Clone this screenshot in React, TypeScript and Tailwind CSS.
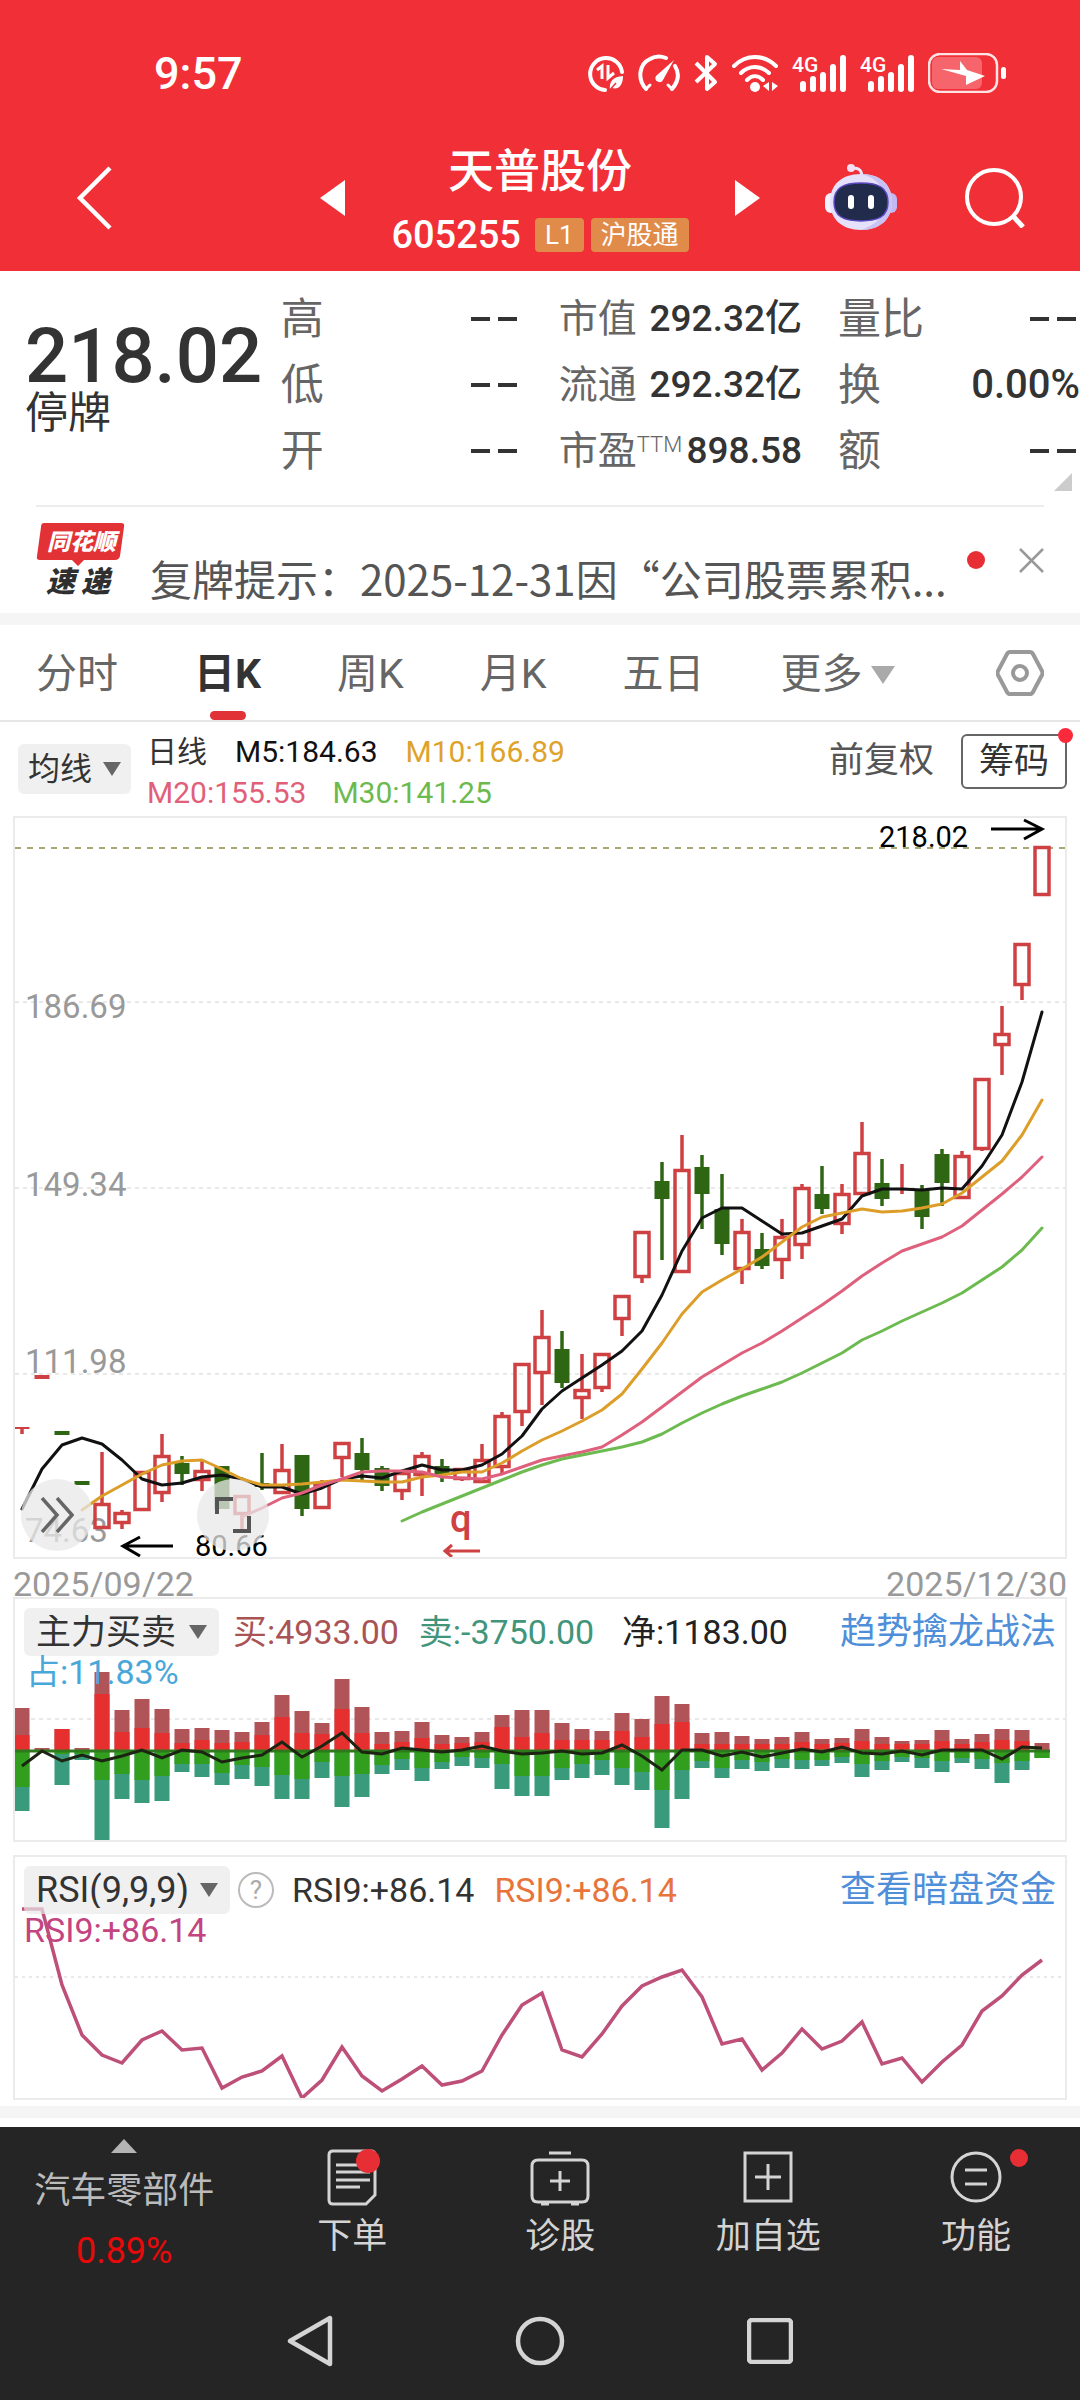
import React from 'react';
import clsx from 'clsx';

type Candle = [dir: 'up' | 'down', high: number, top: number, bottom: number, low: number];
type Flow = [buy: number, mainBuy: number, mainSell: number, sell: number];

const FIRST_X = 22;
const STEP = 20;
const AXIS_Y = 1751;

const CANDLES: Candle[] = [
  ['up', 1428, 1427, 1429, 1434],
  ['up', 1375, 1375, 1379, 1379],
  ['down', 1431, 1431, 1435, 1435],
  ['down', 1481, 1481, 1485, 1485],
  ['up', 1452, 1503, 1529, 1529],
  ['up', 1510, 1512, 1524, 1529],
  ['up', 1471, 1471, 1511, 1511],
  ['up', 1434, 1455, 1494, 1502],
  ['down', 1456, 1463, 1474, 1485],
  ['up', 1460, 1470, 1481, 1491],
  ['down', 1466, 1466, 1509, 1509],
  ['up', 1495, 1495, 1515, 1530],
  ['down', 1453, 1483, 1487, 1490],
  ['up', 1444, 1469, 1494, 1494],
  ['down', 1455, 1455, 1509, 1516],
  ['up', 1480, 1483, 1509, 1509],
  ['up', 1442, 1442, 1459, 1477],
  ['down', 1438, 1453, 1470, 1480],
  ['down', 1466, 1468, 1486, 1491],
  ['up', 1472, 1472, 1492, 1500],
  ['up', 1452, 1455, 1476, 1496],
  ['down', 1459, 1466, 1474, 1482],
  ['up', 1468, 1468, 1480, 1481],
  ['up', 1444, 1459, 1483, 1483],
  ['up', 1412, 1415, 1468, 1474],
  ['up', 1363, 1363, 1413, 1426],
  ['up', 1310, 1336, 1374, 1405],
  ['down', 1331, 1349, 1383, 1388],
  ['up', 1354, 1389, 1399, 1419],
  ['up', 1353, 1353, 1389, 1392],
  ['up', 1295, 1295, 1320, 1336],
  ['up', 1231, 1231, 1278, 1283],
  ['down', 1162, 1181, 1199, 1260],
  ['up', 1135, 1169, 1273, 1273],
  ['down', 1155, 1167, 1194, 1229],
  ['down', 1174, 1209, 1244, 1255],
  ['up', 1219, 1231, 1270, 1284],
  ['down', 1233, 1249, 1266, 1269],
  ['up', 1219, 1236, 1261, 1279],
  ['up', 1184, 1187, 1246, 1259],
  ['down', 1166, 1194, 1209, 1214],
  ['up', 1184, 1193, 1225, 1234],
  ['up', 1122, 1152, 1195, 1195],
  ['down', 1159, 1183, 1199, 1206],
  ['up', 1164, 1188, 1190, 1194],
  ['down', 1185, 1190, 1217, 1229],
  ['down', 1149, 1154, 1183, 1206],
  ['up', 1151, 1155, 1199, 1199],
  ['up', 1078, 1078, 1150, 1151],
  ['up', 1006, 1033, 1046, 1075],
  ['up', 943, 943, 986, 1000],
  ['up', 846, 846, 896, 896],
];

const M5 = [
  1509, 1469, 1445, 1438, 1444, 1460, 1479, 1485, 1483, 1477, 1475, 1479, 1487, 1487, 1494, 1488, 1479, 1476, 1478, 1471,
  1465, 1470, 1470, 1465, 1454, 1436, 1409, 1391, 1378, 1365, 1351, 1331, 1295, 1251, 1218, 1208, 1208, 1221, 1234, 1233,
  1226, 1219, 1196, 1189, 1189, 1190, 1188, 1189, 1166, 1135, 1082, 1012,
];
const M10 = [
  1510, 1496, 1485, 1474, 1465, 1461, 1460, 1469, 1479, 1485, 1485, 1484, 1482, 1480, 1481, 1482, 1482, 1477, 1475, 1472,
  1472, 1463, 1451, 1440, 1431, 1421, 1410, 1394, 1369, 1343, 1314, 1292, 1280, 1269, 1257, 1242, 1227, 1217, 1213, 1209,
  1212, 1211, 1208, 1204, 1193, 1177, 1161, 1135, 1100,
];
const M20 = [
  1517, 1508, 1498, 1493, 1485, 1479, 1472, 1471, 1471, 1472, 1477, 1478, 1479, 1474, 1467, 1460, 1456, 1452, 1447, 1435,
  1422, 1407, 1392, 1377, 1365, 1353, 1343, 1331, 1318, 1305, 1291, 1276, 1263, 1251, 1244, 1237, 1226, 1210, 1194, 1177,
  1157,
];
const M30 = [
  1521, 1512, 1504, 1496, 1488, 1480, 1472, 1465, 1459, 1455, 1451, 1447, 1442, 1434, 1423, 1413, 1404, 1396, 1389, 1382,
  1373, 1363, 1353, 1340, 1331, 1321, 1312, 1303, 1293, 1280, 1267, 1250, 1228,
];

const FLOWS: Flow[] = [
  [43, 16, 36, 60], [3, 0, 0, 0], [22, 22, 3, 34], [3, 0, 3, 9], [79, 57, 29, 90], [41, 19, 23, 48], [52, 23, 29, 52],
  [42, 18, 25, 50], [22, 8, 13, 21], [23, 11, 13, 26], [21, 8, 22, 34], [19, 9, 14, 28], [29, 16, 16, 35], [56, 34, 24, 48],
  [40, 18, 28, 48], [28, 17, 11, 27], [72, 42, 25, 56], [44, 18, 23, 46], [19, 7, 14, 23], [20, 9, 8, 19], [29, 13, 17, 30],
  [16, 7, 11, 18], [14, 8, 6, 15], [19, 9, 7, 17], [36, 24, 13, 38], [41, 14, 25, 45], [41, 18, 25, 45], [28, 11, 17, 29],
  [22, 11, 13, 27], [20, 11, 9, 24], [38, 20, 17, 34], [32, 14, 21, 39], [55, 27, 39, 77], [47, 29, 19, 48], [18, 7, 10, 17],
  [19, 7, 17, 27], [15, 7, 9, 18], [12, 7, 11, 20], [14, 7, 8, 17], [19, 9, 9, 18], [12, 7, 9, 15], [13, 8, 6, 12],
  [22, 10, 13, 26], [14, 7, 10, 19], [10, 7, 6, 11], [11, 7, 7, 17], [21, 10, 10, 21], [12, 7, 7, 12], [17, 9, 8, 18],
  [22, 11, 12, 32], [21, 10, 10, 19], [8, 0, 7, 7],
];
const NET = [
  15, 0, 10, 4, 10, 5, -1, 7, -1, 1, 11, 7, 4, -9, 6, -5, -18, 1, 3, -3, -1, 1, -1, -5, 0, 3, 2, 0, 3, 2, -6, 5, 19, -1, -1,
  5, 1, 6, 2, -2, 1, -4, 2, 3, 0, 4, -1, -1, -1, 8, -4, -3,
];

const RSI = [
  1909, 1909, 1985, 2035, 2055, 2063, 2040, 2031, 2050, 2048, 2088, 2077, 2071, 2056, 2098, 2080, 2047, 2076, 2091, 2079,
  2066, 2085, 2081, 2071, 2035, 2005, 1993, 2050, 2057, 2034, 2006, 1986, 1977, 1970, 1997, 2044, 2039, 2070, 2053, 2029,
  2049, 2041, 2022, 2064, 2058, 2082, 2062, 2045, 2011, 1996, 1975, 1960,
];

const PRICE_LABELS = [
  { text: '186.69', y: 1018 },
  { text: '149.34', y: 1196 },
  { text: '111.98', y: 1373 },
  { text: '74.63', y: 1542 },
];

const xAt = (i: number) => FIRST_X + i * STEP;

// Series are aligned to the last trading day, shorter ones start later.
const linePoints = (ys: number[]) => ys.map((y, i) => `${xAt(i + CANDLES.length - ys.length)},${y}`).join(' ');

const StatusIcons: React.FC = () => (
  <div className="flex items-center gap-3.5 text-white">
    <svg width="36" height="38" viewBox="0 0 36 38" fill="none" stroke="currentColor" strokeWidth="4">
      <path d="M17 36A16 16 0 1 1 34 18" strokeLinecap="round" />
      <path d="M9 16l5-4v13M20 11v13l6-5" strokeWidth="3" />
      <path d="M22 36c-1-9 3-13 13-14 0 10-5 14-11 12z" fill="currentColor" stroke="none" />
      <path d="M20 38l8-9" stroke="#f12f37" strokeWidth="1.5" />
    </svg>
    <svg width="42" height="38" viewBox="0 0 42 38" fill="none" stroke="currentColor" strokeWidth="4" strokeLinecap="round">
      <path d="M8 35C-1 25 1 10 12 5c5-3 11-3 16-1" />
      <path d="M34 35c6-7 8-15 3-23" />
      <path d="M8 35l4-4M34 35l-4-4" strokeWidth="3" />
      <path d="M36 6L25 26a4 4 0 0 1-7-4z" fill="currentColor" stroke="none" />
    </svg>
    <svg width="24" height="38" viewBox="0 0 24 38" fill="none" stroke="currentColor" strokeWidth="4" strokeLinejoin="round">
      <path d="M2 9l19 19-8 7V3l8 7L2 28" />
    </svg>
    <svg width="46" height="38" viewBox="0 0 46 38" fill="none" stroke="currentColor" strokeWidth="4" strokeLinecap="round">
      <path d="M2 12C14 0 32 0 44 12" />
      <path d="M9 19c8-8 20-8 28 0" />
      <path d="M15 26c5-5 11-5 16 0" />
      <circle cx="23" cy="33" r="5" fill="currentColor" stroke="none" />
      <path d="M37 28v9l-6-5zM40 28v9l6-5z" fill="currentColor" stroke="none" />
    </svg>
    {['sim1', 'sim2'].map((sim) => (
      <svg key={sim} className="overflow-visible" width="54" height="38" viewBox="0 0 54 38" fill="currentColor">
        <text x="0" y="18" fontSize="21" fontWeight="500">4G</text>
        <rect x="8" y="27" width="6" height="11" rx="3" />
        <rect x="18" y="22" width="6" height="16" rx="3" />
        <rect x="28" y="18" width="6" height="20" rx="3" />
        <rect x="38" y="10" width="6" height="28" rx="3" />
        <rect x="48" y="1" width="6" height="37" rx="3" />
      </svg>
    ))}
    <svg width="78" height="40" viewBox="0 0 78 40" fill="none">
      <rect x="4" y="4" width="50" height="32" rx="6" fill="#f6656c" />
      <rect x="1" y="1" width="68" height="38" rx="11" stroke="#ffe3e4" strokeWidth="2.5" />
      <path d="M32 8l7 9 18 6-19 9v-9l-25-7 19 1z" fill="currentColor" />
      <rect x="73" y="14" width="5" height="12" rx="2.5" fill="currentColor" />
    </svg>
  </div>
);

const RobotIcon: React.FC = () => (
  <svg width="72" height="68" viewBox="0 0 72 68" fill="none">
    <path d="M26 5c6-2 11 0 11 8" stroke="#ece6fb" strokeWidth="3" />
    <circle cx="26" cy="4" r="4" fill="#f5dff5" />
    <rect x="0" y="29" width="12" height="20" rx="6" fill="#f3f1ff" />
    <rect x="60" y="29" width="12" height="20" rx="6" fill="#c3b9f2" />
    <path d="M36 10c20 0 31 11 31 28S55 66 36 66 5 55 5 38s11-28 31-28z" fill="#e6e1fb" />
    <path d="M36 10c20 0 31 11 31 28S55 66 36 66c14-5 24-13 24-28S50 13 36 10z" fill="#c9c2f5" />
    <path d="M36 19c18 0 27 5 27 19s-9 19-27 19S9 52 9 38s9-19 27-19z" fill="#212c4d" stroke="#5a48c0" strokeWidth="1.5" />
    <rect x="23" y="31" width="6" height="14" rx="3" fill="#fff" />
    <rect x="43" y="31" width="6" height="14" rx="3" fill="#fff" />
  </svg>
);

const Header: React.FC = () => (
  <header className="bg-[#f12f37] pt-[45px] text-white">
    <div className="flex h-14 items-center justify-between pl-[154px] pr-[74px]">
      <span className="text-[45px] font-medium leading-none">9:57</span>
      <StatusIcons />
    </div>
    <nav className="mt-6 grid h-[146px] grid-cols-[1fr_440px_1fr] items-center">
      <button aria-label="返回" className="w-fit pl-[76px]">
        <svg width="36" height="64" viewBox="0 0 36 64" fill="none" stroke="currentColor" strokeWidth="4.5">
          <path d="M34 2L4 32l30 30" />
        </svg>
      </button>
      <div className="flex items-center justify-between">
        <button aria-label="上一只">
          <svg width="25" height="36" viewBox="0 0 25 36" fill="currentColor"><path d="M25 0v36L0 18z" /></svg>
        </button>
        <div className="flex flex-col items-center gap-[18px]">
          <h1 className="text-[46px] font-medium leading-[56px]">天普股份</h1>
          <div className="flex h-9 items-center gap-[7px]">
            <span className="mr-[7px] text-[38px] font-medium leading-none">605255</span>
            <span className="flex h-[34px] items-center rounded-sm bg-[#e08b4a] px-2.5 text-[26px]">L1</span>
            <span className="flex h-[34px] items-center rounded-sm bg-[#e08b4a] px-2.5 text-[26px]">沪股通</span>
          </div>
        </div>
        <button aria-label="下一只">
          <svg width="25" height="36" viewBox="0 0 25 36" fill="currentColor"><path d="M0 0v36l25-18z" /></svg>
        </button>
      </div>
      <div className="flex items-center gap-[68px] pl-[65px]">
        <button aria-label="智能助手"><RobotIcon /></button>
        <button aria-label="搜索">
          <svg width="60" height="60" viewBox="0 0 60 60" fill="none" stroke="currentColor" strokeWidth="4">
            <circle cx="29" cy="29" r="27" />
            <path d="M47 47l11 12" strokeWidth="5" />
          </svg>
        </button>
      </div>
    </nav>
  </header>
);

const Stat: React.FC<{ label: React.ReactNode; value: string; small?: boolean }> = ({ label, value, small }) => (
  <div className="flex h-[66px] items-center justify-between whitespace-nowrap">
    <dt className={clsx('text-[#666]', small ? 'text-[39px]' : 'text-[43px]')}>{label}</dt>
    {value === '--' ? (
      <dd className="flex gap-2 pr-1" aria-label="--">
        <span className="h-1 w-[19px] bg-[#333]" />
        <span className="h-1 w-[19px] bg-[#333]" />
      </dd>
    ) : (
      <dd className={clsx('font-medium text-[#333]', small ? 'text-[37px]' : 'text-[40px]')}>{value}</dd>
    )}
  </div>
);

const Quote: React.FC = () => (
  <section className="relative flex pb-[21px] pt-[15px]">
    <div className="w-[26%] pl-[25px] pt-[29px] text-[#333]">
      <p className="text-[76px] font-medium leading-[82px]">218.02</p>
      <p className="-mt-1.5 text-[43px] leading-[44px]">停牌</p>
    </div>
    <dl className="w-60">
      <Stat label="高" value="--" />
      <Stat label="低" value="--" />
      <Stat label="开" value="--" />
    </dl>
    <dl className="ml-[38px] flex-1">
      <Stat small label="市值" value="292.32亿" />
      <Stat small label="流通" value="292.32亿" />
      <Stat small label={<>市盈<sup className="-top-3 text-[22px] font-light">TTM</sup></>} value="898.58" />
    </dl>
    <dl className="ml-9 w-[242px]">
      <Stat label="量比" value="--" />
      <Stat label="换" value="0.00%" />
      <Stat label="额" value="--" />
    </dl>
    <svg className="absolute bottom-3.5 right-2" width="18" height="18" viewBox="0 0 18 18" fill="#ccc">
      <path d="M18 0v18H0z" />
    </svg>
  </section>
);

const Notice: React.FC = () => (
  <section className="mx-9 flex h-[108px] items-center border-t-2 border-[#ececec]">
    <svg className="shrink-0 overflow-visible" width="90" height="74" viewBox="0 0 90 74">
      <path d="M8 0h77q4 0 3 4l-4 29q-1 4-5 4H48l-6 6-6-6H4q-4 0-3-4L5 4q0-4 3-4z" fill="#e23236" />
      <text x="11" y="27" fontSize="23" fontWeight="900" fontStyle="italic" fill="#fff">同花顺</text>
      <text x="10" y="69" fontSize="29" fontWeight="900" fontStyle="italic" fill="#2f2f2f">速</text>
      <text x="45" y="69" fontSize="29" fontWeight="900" fontStyle="italic" fill="#2f2f2f">递</text>
    </svg>
    <a
      href="#notice"
      className="ml-6 mt-9 min-w-0 flex-1 whitespace-nowrap font-['Noto_Sans_CJK_SC',sans-serif] text-[42px] leading-[60px] text-[#555]"
    >
      复牌提示：2025-12-31因“公司股票累积...
    </a>
    <span className="mr-[34px] size-[18px] shrink-0 rounded-full bg-[#e62e34]" />
    <button aria-label="关闭">
      <svg width="25" height="25" viewBox="0 0 25 25" stroke="#999" strokeWidth="2.5"><path d="M1 1l23 23M24 1L1 24" /></svg>
    </button>
  </section>
);

const Triangle: React.FC<{ className?: string }> = ({ className }) => (
  <svg className={className} width="18" height="14" viewBox="0 0 18 14" fill="currentColor"><path d="M0 0h18L9 14z" /></svg>
);

const PERIODS = ['分时', '日K', '周K', '月K', '五日'];

const PeriodTabs: React.FC = () => (
  <nav className="flex h-[97px] items-center gap-[76px] border-b-2 border-[#e6e6e6] px-9 text-[41px] text-[#666]">
    {PERIODS.map((p) => (
      <button key={p} className={clsx('relative flex h-full items-center pt-1', p === '日K' && 'font-bold text-[#333]')}>
        {p}
        {p === '日K' && <span className="absolute bottom-0 left-1/2 h-[9px] w-9 -translate-x-1/2 rounded-full bg-[#e03237]" />}
      </button>
    ))}
    <button className="flex items-center gap-2 pt-1">
      更多
      <svg width="24" height="18" viewBox="0 0 24 18" fill="#aaa"><path d="M0 0h24L12 18z" /></svg>
    </button>
    <button aria-label="设置" className="ml-auto">
      <svg width="48" height="46" viewBox="0 0 48 46" fill="none" stroke="#999" strokeWidth="4">
        <path d="M14 2h20q2 0 3 2l9 17q1 2 0 4l-9 17q-1 2-3 2H14q-2 0-3-2L2 25q-1-2 0-4l9-17q1-2 3-2z" />
        <circle cx="24" cy="23" r="7" />
      </svg>
    </button>
  </nav>
);

const Picker: React.FC<{ name: string; value: string; className: string }> = ({ name, value, className }) => (
  <label className={clsx('flex shrink-0 items-center rounded-md bg-[#e9e9e9]/70 text-[#333]', className)}>
    <select aria-label={name} className="appearance-none bg-transparent leading-none outline-none">
      <option>{value}</option>
    </select>
    <Triangle className="text-[#666]" />
  </label>
);

const AverageBar: React.FC = () => (
  <div className="flex h-[94px] items-start pl-[18px] pr-[13px]">
    <Picker name="主图指标" value="均线" className="mt-[22px] h-[50px] gap-2.5 px-2.5 text-[32px]" />
    <div className="ml-4 mt-[9px] text-[30px] leading-[41px]">
      <p className="flex gap-7">
        <span className="text-[#333]">日线</span>
        <span className="text-[#111]">M5:184.63</span>
        <span className="text-[#dfa22a]">M10:166.89</span>
      </p>
      <p className="flex gap-[26px]">
        <span className="text-[#e0607a]">M20:155.53</span>
        <span className="text-[#6cba4e]">M30:141.25</span>
      </p>
    </div>
    <div className="ml-auto mt-3 flex items-center gap-[27px] text-[35px]">
      <button className="text-[#555]">前复权</button>
      <button className="relative h-[55px] rounded-md border-2 border-[#666] px-4 leading-none text-[#333]">
        筹码
        <span className="absolute -right-2 -top-2 size-[15px] rounded-full bg-[#fb2a3a]" />
      </button>
    </div>
  </div>
);

const CandleShape: React.FC<{ x: number; candle: Candle }> = ({ x, candle: [dir, high, top, bottom, low] }) => {
  const color = dir === 'up' ? '#cf4043' : '#2f6614';
  const flat = bottom - top < 6;
  return (
    <g stroke={color} strokeWidth={3.5}>
      {high < top && <line x1={x} x2={x} y1={high} y2={top} />}
      {low > bottom && <line x1={x} x2={x} y1={bottom} y2={low} />}
      {dir === 'up' && !flat ? (
        <rect x={x - 7} y={top + 1.5} width={14} height={bottom - top - 3} fill="none" />
      ) : (
        <rect x={x - 7.5} y={top} width={15} height={bottom - top} fill={color} stroke="none" />
      )}
    </g>
  );
};

const KLineChart: React.FC = () => (
  <div className="relative mx-[13px] border-2 border-[#ebebeb]">
    <svg className="block h-auto w-full" viewBox="15 818 1050 739" fill="none">
      {[1002, 1188, 1374].map((y) => (
        <line key={y} x1="15" x2="1065" y1={y} y2={y} stroke="#e8e8e8" strokeWidth="2" strokeDasharray="4 4" />
      ))}
      <line x1="15" x2="1065" y1="848" y2="848" stroke="#aaa873" strokeWidth="2" strokeDasharray="6 6" />
      <g fill="#999" fontSize="33">
        {PRICE_LABELS.map((l) => (
          <text key={l.text} x="25" y={l.y}>{l.text}</text>
        ))}
      </g>
      {CANDLES.map((c, i) => (
        <CandleShape key={i} x={xAt(i)} candle={c} />
      ))}
      <g strokeWidth="3" strokeLinejoin="round" strokeLinecap="round">
        <polyline points={linePoints(M5)} stroke="#111" />
        <polyline points={linePoints(M10)} stroke="#dc9e28" />
        <polyline points={linePoints(M20)} stroke="#df607c" />
        <polyline points={linePoints(M30)} stroke="#6dba50" />
      </g>
      <g stroke="#000" strokeWidth="3">
        <path d="M991 829h51M1024 820l18 9-18 10" />
        <path d="M173 1546h-50M140 1537l-17 9 17 10" />
      </g>
      <g fill="#000" fontSize="29">
        <text x="879" y="847">218.02</text>
        <text x="195" y="1556">80.66</text>
      </g>
      <text x="450" y="1532" fill="#cf4043" fontSize="38" fontWeight="500">q</text>
      <path d="M480 1551h-35M452 1545l-7 6 7 6" stroke="#cf4043" strokeWidth="3" />
    </svg>
    <button aria-label="展开" className="absolute bottom-1.5 left-1.5 flex size-[72px] items-center justify-center rounded-full bg-[#e8e8e8]/75">
      <svg width="34" height="36" viewBox="0 0 34 36" fill="none" stroke="#666" strokeWidth="3.5"><path d="M2 1l15 17L2 35M17 1l15 17-15 17" /></svg>
    </button>
    <button aria-label="全屏" className="absolute bottom-1.5 left-[182px] flex size-[72px] items-center justify-center rounded-full bg-[#e8e8e8]/75">
      <svg width="36" height="36" viewBox="0 0 36 36" fill="none" stroke="#555" strokeWidth="4"><path d="M2 17V2h16M34 19v15H18" /></svg>
    </button>
  </div>
);

const FlowPanel: React.FC = () => (
  <section className="relative mx-[13px] border-2 border-[#ebebeb]">
    <svg className="block h-auto w-full" viewBox="15 1599 1050 241" fill="none">
      <line x1="15" x2="1065" y1="1719" y2="1719" stroke="#e8e8e8" strokeWidth="2" strokeDasharray="4 4" />
      {FLOWS.map(([buy, mainBuy, mainSell, sell], i) => (
        <g key={i}>
          <rect x={xAt(i) - 7.5} y={AXIS_Y - buy} width="15" height={buy} fill="#b05457" />
          <rect x={xAt(i) - 7.5} y={AXIS_Y - mainBuy} width="15" height={mainBuy} fill="#e6302f" />
          <rect x={xAt(i) - 7.5} y={AXIS_Y} width="15" height={sell} fill="#3a9a7c" />
          <rect x={xAt(i) - 7.5} y={AXIS_Y} width="15" height={mainSell} fill="#329e1e" />
        </g>
      ))}
      <line x1="15" x2="1050" y1={AXIS_Y} y2={AXIS_Y} stroke="#2c7a1c" strokeWidth="3" />
      <polyline points={linePoints(NET.map((v) => AXIS_Y + v))} stroke="#1c2412" strokeWidth="3" />
    </svg>
    <div className="absolute inset-x-0 top-0 px-[9px] pt-[9px] text-[34px]">
      <div className="flex items-center whitespace-nowrap leading-[48px]">
        <Picker name="副图指标" value="主力买卖" className="h-12 gap-3 px-3 text-[35px]" />
        <span className="ml-3.5 text-[#a95355]">买:4933.00</span>
        <span className="ml-5 text-[#41957a]">卖:-3750.00</span>
        <span className="ml-7 text-[#222]">净:1183.00</span>
        <a href="#strategy" className="ml-auto text-[36px] text-[#4f8fd9]">趋势擒龙战法</a>
      </div>
      <p className="pl-0.5 leading-8 text-[#49a7d9]">占:11.83%</p>
    </div>
  </section>
);

const RsiPanel: React.FC = () => (
  <section className="relative mx-[13px] mt-[13px] border-2 border-[#ebebeb]">
    <svg className="block h-auto w-full" viewBox="15 1857 1050 241" fill="none">
      <line x1="15" x2="1065" y1="1977" y2="1977" stroke="#e8e8e8" strokeWidth="2" strokeDasharray="3 4" />
      <polyline points={linePoints(RSI)} stroke="#bd4f78" strokeWidth="3.5" />
    </svg>
    <div className="absolute inset-x-0 top-0 px-[9px] pt-[9px] text-[34px]">
      <div className="flex items-center whitespace-nowrap leading-[48px]">
        <Picker name="副图指标" value="RSI(9,9,9)" className="h-12 gap-2.5 px-3 text-[36px]" />
        <button aria-label="指标说明" className="ml-2 flex size-9 items-center justify-center rounded-full border-2 border-[#bbb] text-[26px] leading-none text-[#aaa]">
          ?
        </button>
        <span className="ml-[18px] text-[#333]">RSI9:+86.14</span>
        <span className="ml-5 text-[#e8743c]">RSI9:+86.14</span>
        <a href="#dark-pool" className="ml-auto text-[36px] text-[#4f8fd9]">查看暗盘资金</a>
      </div>
      <p className="leading-8 text-[#c34480]">RSI9:+86.14</p>
    </div>
  </section>
);

const ACTIONS = [
  {
    label: '下单',
    dot: 'right-[76px] top-[22px] size-6',
    icon: (
      <path d="M6 2h38q4 0 4 4v40l-9 9H6q-4 0-4-4V6q0-4 4-4zM9 16h30M9 23h34M9 31h34M9 38h24" />
    ),
  },
  {
    label: '诊股',
    dot: '',
    icon: (
      <path d="M14 4h22M3 11h44q6 0 6 6v30q0 6-6 6H3q-6 0-6-6V17q0-6 6-6zM25 22v20M15 32h20M6 55h8M36 55h8" />
    ),
  },
  { label: '加自选', dot: '', icon: <path d="M2 4h46v48H2zM25 15v26M12 28h26" /> },
  {
    label: '功能',
    dot: 'right-[52px] top-[22px] size-[18px]',
    icon: (
      <>
        <circle cx="25" cy="28" r="24" />
        <path d="M14 21h22M14 35h22" />
      </>
    ),
  },
];

const BottomBar: React.FC = () => (
  <footer className="bg-[#252525] pb-[27px] text-[#d4d4d4]">
    <div className="flex h-[164px]">
      <button className="flex w-[23%] flex-col items-center pt-3 text-[36px] text-[#bbb]">
        <svg width="26" height="14" viewBox="0 0 26 14" fill="#b4b4b4"><path d="M13 0l13 14H0z" /></svg>
        <span className="mt-3.5 leading-[48px]">汽车零部件</span>
        <span className="mt-3.5 leading-[44px] text-[#e60a0a]">0.89%</span>
      </button>
      {ACTIONS.map((a) => (
        <button key={a.label} className="relative flex flex-1 flex-col items-center pt-[22px] text-[35px]">
          <svg className="overflow-visible" width="50" height="58" viewBox="0 0 50 58" fill="none" stroke="currentColor" strokeWidth="3">
            {a.icon}
          </svg>
          <span className="mt-1.5 leading-[48px]">{a.label}</span>
          {a.dot && <span className={clsx('absolute rounded-full bg-[#e62e34]', a.dot)} />}
        </button>
      ))}
    </div>
    <div className="mt-[18px] flex h-16 items-center justify-center gap-[182px]">
      <button aria-label="后退">
        <svg width="46" height="52" viewBox="0 0 46 52" fill="none" stroke="currentColor" strokeWidth="4.5" strokeLinejoin="round"><path d="M43 3v46L3 26z" /></svg>
      </button>
      <button aria-label="主页">
        <svg width="50" height="50" viewBox="0 0 50 50" fill="none" stroke="currentColor" strokeWidth="4.5"><circle cx="25" cy="25" r="22" /></svg>
      </button>
      <button aria-label="最近任务">
        <svg width="46" height="46" viewBox="0 0 46 46" fill="none" stroke="currentColor" strokeWidth="4.5"><rect x="2" y="2" width="42" height="42" rx="3" /></svg>
      </button>
    </div>
  </footer>
);

const App: React.FC = () => (
  <div className="flex min-h-screen flex-col bg-white font-[Roboto,'Noto_Sans_CJK_SC',sans-serif]" lang="zh-CN">
    <Header />
    <main className="flex-1">
      <Quote />
      <Notice />
      <div className="h-3 bg-[#f5f5f5]" />
      <PeriodTabs />
      <AverageBar />
      <KLineChart />
      <div className="flex h-[38px] items-end justify-between px-[13px] text-[34px] leading-[26px] text-[#999]">
        <span>2025/09/22</span>
        <span>2025/12/30</span>
      </div>
      <FlowPanel />
      <RsiPanel />
      <div className="mt-1.5 h-3 bg-[#f5f5f5]" />
    </main>
    <BottomBar />
  </div>
);

export default App;
